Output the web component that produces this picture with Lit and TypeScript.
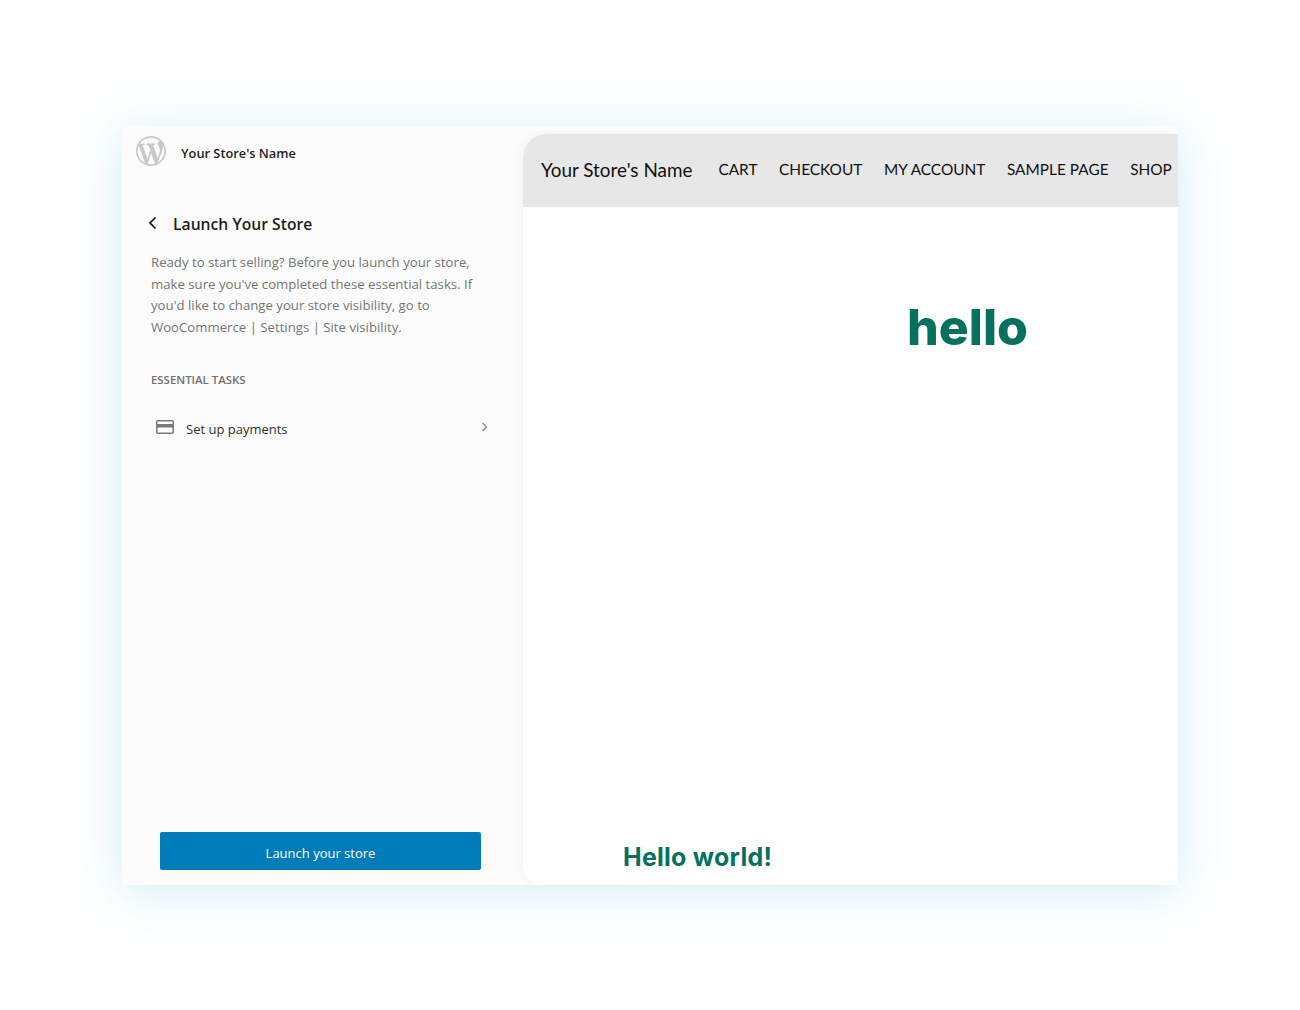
import { LitElement, html, css } from "lit";
import { customElement } from "lit/decorators.js";

const WP = "M20 10c0-5.51-4.49-10-10-10C4.48 0 0 4.49 0 10c0 5.52 4.48 10 10 10 5.51 0 10-4.48 10-10zM7.78 15.37L4.37 6.22c.55-.02 1.17-.08 1.17-.08.5-.06.44-1.13-.06-1.11 0 0-1.45.11-2.37.11-.18 0-.37 0-.58-.01C4.12 2.69 6.87 1.11 10 1.11c2.33 0 4.45.87 6.05 2.34-.68-.11-1.65.39-1.65 1.58 0 .74.45 1.36.9 2.1.35.61.55 1.36.55 2.46 0 1.49-1.4 5-1.4 5l-3.03-8.37c.54-.02.82-.17.82-.17.5-.05.44-1.25-.06-1.22 0 0-1.44.12-2.38.12-.87 0-2.33-.12-2.33-.12-.5-.03-.56 1.2-.06 1.22l.92.08 1.26 3.41zM17.41 10c.24-.64.74-1.87.43-4.25.7 1.29 1.05 2.71 1.05 4.25 0 3.29-1.73 6.24-4.4 7.78.97-2.59 1.94-5.2 2.92-7.78zM6.1 18.09C3.12 16.65 1.11 13.53 1.11 10c0-1.3.23-2.48.72-3.59C3.25 10.3 4.67 14.2 6.1 18.09zm4.03-6.63l2.58 6.98c-.86.29-1.76.45-2.71.45-.79 0-1.57-.11-2.29-.33.81-2.38 1.62-4.74 2.42-7.1z";

@customElement("app-root")
export class AppRoot extends LitElement {
  static styles = css`
    :host { display: block; width: 1300px; height: 1010px; background: #fff; overflow: hidden; font-family: "Open Sans", "Noto Sans", sans-serif; }
    .page { padding: 126px 122px 0; }
    .frame { width: 1056px; height: 759px; display: flex; background: #fcfcfc; box-shadow: 0 6px 45px rgba(150, 215, 235, 0.42); }
    .side { width: 401px; flex: none; display: flex; flex-direction: column; }
    .brand { display: flex; align-items: center; gap: 15px; padding: 10px 0 0 14px; height: 30px; }
    .brand svg { width: 30px; height: 30px; fill: #c8c8c8; flex: none; }
    .brand span { font-size: 12.8px; font-weight: 600; color: #1e1e1e; margin-top: 3px; }
    .title { display: flex; align-items: center; margin: 38px 0 0 25px; height: 40px; }
    .title svg { width: 12px; height: 16px; flex: none; fill: none; stroke: #111; stroke-width: 1.7; margin-top: -2px; }
    .title h1 { margin: 0 0 0 14px; font-size: 15.7px; font-weight: 600; color: #1e1e1e; line-height: 24px; }
    .desc { margin: 8px 0 0 29px; width: 335px; font-size: 13.2px; line-height: 21.5px; color: #757575; }
    .label { margin: 34px 0 0 29px; font-size: 11.4px; font-weight: 600; line-height: 16px; color: #707070; }
    .task { display: flex; align-items: center; margin: 30px 0 0 34px; height: 20px; width: 332px; }
    .task .card { width: 18px; height: 14px; flex: none; margin-top: -3px; }
    .task span { margin-left: 12px; font-size: 13px; color: #2f2f2f; flex: 1; margin-top: 1px; }
    .task .chev { width: 7px; height: 10px; flex: none; fill: none; stroke: #8a8a8a; stroke-width: 1.4; margin-top: -3px; }
    .action { margin-top: auto; padding: 0 0 15px 38px; }
    .action button { display: block; width: 321px; height: 38px; border: 0; border-radius: 2px; background: #007cba; color: #fff; font: 400 13px "Open Sans", sans-serif; padding: 3px 0 0; }
    .preview { flex: 1; margin-top: 8px; display: flex; flex-direction: column; background: #fff; border-radius: 24px 0 0 20px; overflow: hidden; box-shadow: -3px 0 8px rgba(0, 0, 0, 0.035); }
    .bar { height: 73px; flex: none; background: #e7e7e7; display: flex; align-items: center; padding-left: 18px; white-space: nowrap; font-family: "Lato", sans-serif; color: #111; }
    .bar b { font-weight: 400; font-size: 18.9px; margin: -2px 26px 0 0; }
    .bar nav { display: flex; gap: 21.6px; font-size: 15.4px; margin-top: -1px; text-rendering: geometricPrecision; }
    .stage { flex: 1; display: flex; flex-direction: column; font-family: "Inter", sans-serif; font-weight: 800; color: #07705f; }
    .hello { margin: 90px 0 0 384px; font-size: 50px; line-height: 60px; }
    .world { margin: auto 0 12px 100px; font-size: 25px; line-height: 32px; letter-spacing: .25px; font-weight: 700; }
  `;

  render() {
    return html`<div class="page"><div class="frame">
      <aside class="side">
        <div class="brand">
          <svg viewBox="0 0 20 20"><path d=${WP}></path></svg>
          <span>Your Store's Name</span>
        </div>
        <div class="title">
          <svg viewBox="0 0 12 16"><path d="M8.5 2.5 3 8l5.500 5.500"></path></svg>
          <h1>Launch Your Store</h1>
        </div>
        <p class="desc">Ready to start selling? Before you launch your store, make sure you've completed these essential tasks. If you'd like to change your store visibility, go to WooCommerce | Settings | Site visibility.</p>
        <div class="label">ESSENTIAL TASKS</div>
        <div class="task">
          <svg class="card" viewBox="0 0 18 14"><rect x=".75" y=".75" width="16.500" height="12.500" rx="1" fill="none" stroke="#7a7a7a" stroke-width="1.500"></rect><rect x="1" y="4" width="16" height="3.500" fill="#7a7a7a"></rect></svg>
          <span>Set up payments</span>
          <svg class="chev" viewBox="0 0 7 10"><path d="M1.500 1 5.500 5l-4 4"></path></svg>
        </div>
        <div class="action"><button>Launch your store</button></div>
      </aside>
      <main class="preview">
        <header class="bar">
          <b>Your Store's Name</b>
          <nav><span>CART</span><span>CHECKOUT</span><span>MY ACCOUNT</span><span>SAMPLE PAGE</span><span>SHOP</span></nav>
        </header>
        <section class="stage">
          <div class="hello">hello</div>
          <div class="world">Hello world!</div>
        </section>
      </main>
    </div></div>`;
  }
}
